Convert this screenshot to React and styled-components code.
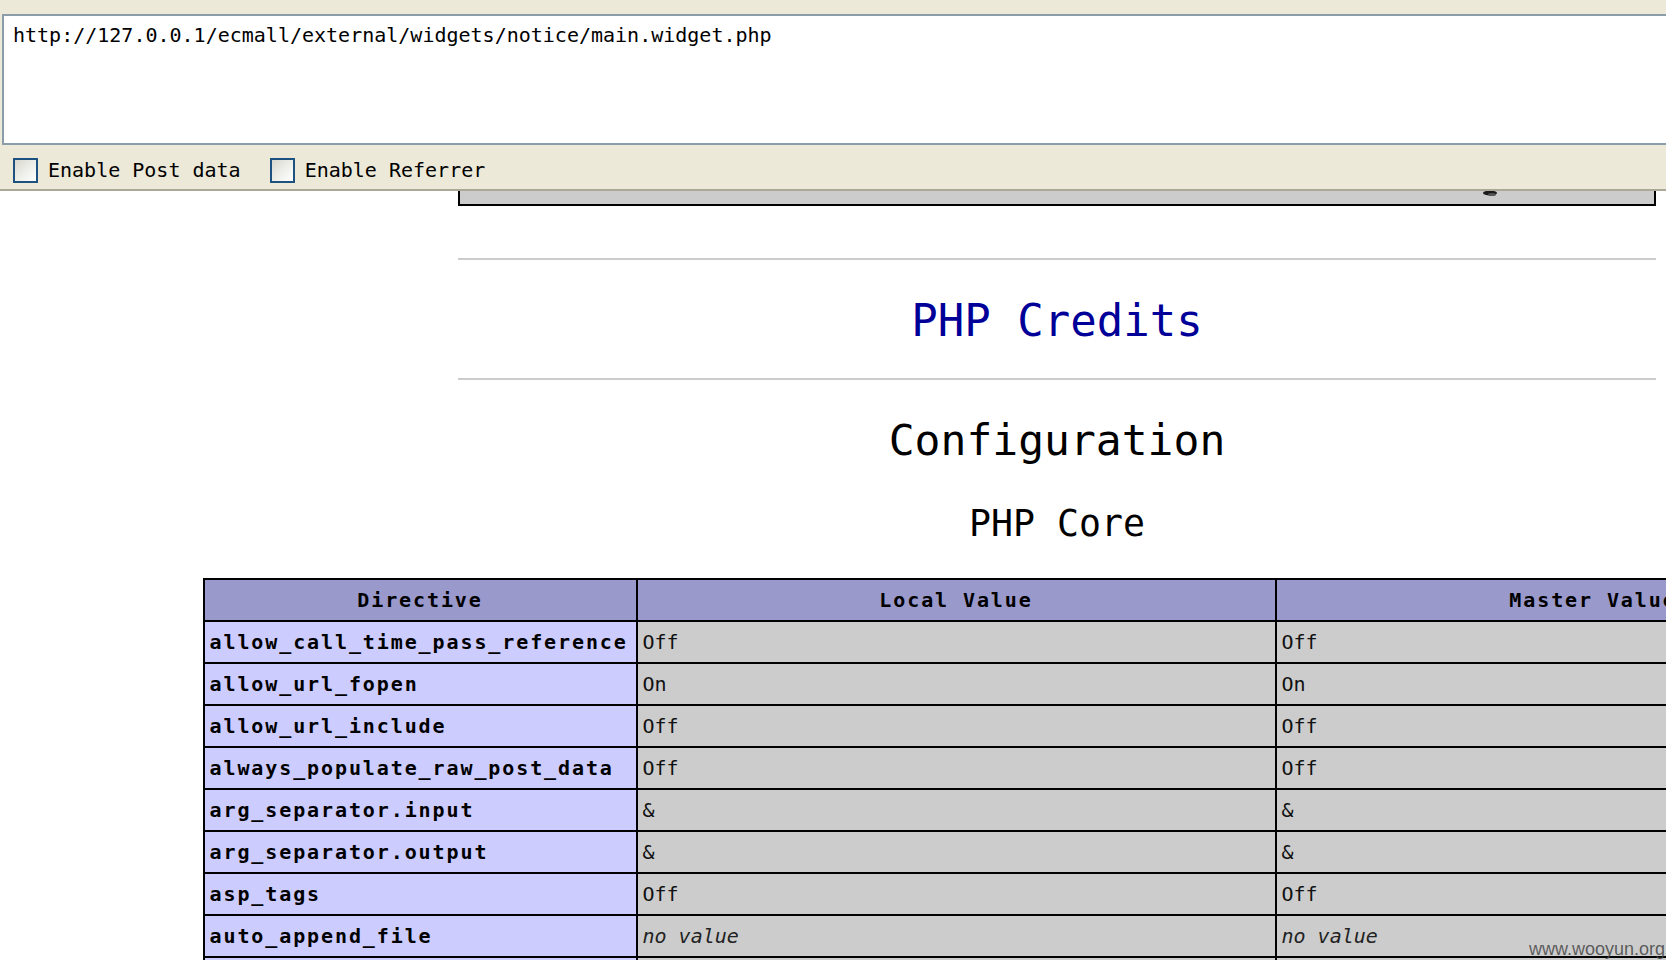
import React from "react";
import styled, { createGlobalStyle } from "styled-components";

const Global = createGlobalStyle`
  html, body { margin: 0; padding: 0; overflow: hidden; background: #fff; }
  body { font-family: "DejaVu Sans Mono", "Liberation Mono", monospace; color: #000; }
`;

const Screen = styled.div`
  position: relative;
  width: 1666px;
  height: 960px;
  display: flex;
  flex-direction: column;
  overflow: hidden;
`;

const HackBar = styled.div`
  flex: none;
  background: #ece9d8;
  padding-top: 14px;
  border-bottom: 2px solid #aca899;
  overflow: hidden;
`;

const UrlBox = styled.textarea`
  display: block;
  box-sizing: border-box;
  width: 1720px;
  height: 131px;
  margin: 0 0 0 2px;
  padding: 7px 9px 5px;
  border: 2px solid #8b9daa;
  background: #fff;
  font: 20px/24px "DejaVu Sans Mono", "Liberation Mono", monospace;
  color: #000;
  resize: none;
  outline: none;
  overflow: hidden;
`;

const Options = styled.div`
  box-sizing: border-box;
  height: 44px;
  display: flex;
  align-items: center;
  gap: 29px;
  padding: 6px 0 0 13px;
`;

const Option = styled.label`
  display: flex;
  align-items: center;
  gap: 10px;
  font-size: 20px;
  line-height: 24px;
  color: #000;
`;

const Box = styled.span`
  box-sizing: border-box;
  width: 25px;
  height: 25px;
  border: 2px solid #1c5180;
  background: linear-gradient(135deg, #d6d6cf 0%, #ececE6 45%, #ffffff 100%);
`;

const Viewport = styled.div`
  flex: 1;
  overflow: hidden;
  background: #fff;
`;

const Page = styled.div`
  width: 2114px;
  display: flex;
  flex-direction: column;
  align-items: center;
`;

const VersionBox = styled.div`
  box-sizing: border-box;
  width: 1198px;
  height: 15px;
  border: 2px solid #000;
  border-top: 0;
  background: #cccccc;
  display: flex;
  justify-content: flex-end;
  align-items: flex-start;
  padding-right: 156px;
`;

const Rule = styled.hr`
  width: 1198px;
  height: 2px;
  border: 0;
  background: #cccccc;
  margin: ${(p) => p.$top}px 0 0;
`;

const Title = styled.h1`
  margin: ${(p) => p.$top}px 0 0;
  font-family: "DejaVu Sans Mono", "Liberation Mono", monospace;
  font-weight: normal;
  font-size: ${(p) => p.$size}px;
  line-height: ${(p) => p.$lh}px;
  color: ${(p) => p.$color || "#000"};
  text-align: center;
  white-space: nowrap;
`;

const TitleLink = styled.a`
  color: #000099;
  text-decoration: none;
`;

const Table = styled.table`
  border-collapse: collapse;
  table-layout: fixed;
  width: 1707px;
  margin-top: 33px;
  font-size: 20px;
`;

const Col = styled.col`
  width: ${(p) => p.$w}px;
`;

const cellBg = { h: "#9999cc", e: "#ccccff", v: "#cccccc" };

const Cell = styled.td`
  border: 2px solid #000;
  padding: 8px 5px;
  line-height: 24px;
  white-space: nowrap;
  overflow: hidden;
  background: ${(p) => cellBg[p.$kind]};
  font-weight: ${(p) => (p.$kind === "v" ? "normal" : "bold")};
  letter-spacing: ${(p) => (p.$kind === "v" ? "0" : "1.9px")};
  text-align: ${(p) => (p.$kind === "h" ? "center" : "left")};
  color: ${(p) => (p.$kind === "v" ? "#111" : "#000")};
`;

const NoValue = styled.i`
  font-style: italic;
  color: #222;
`;

const Watermark = styled.div`
  position: absolute;
  right: 1px;
  bottom: 2px;
  font-family: "Liberation Sans", Arial, sans-serif;
  font-size: 18px;
  line-height: 18px;
  color: rgba(70, 70, 70, 0.85);
`;

const rows = [
  ["allow_call_time_pass_reference", "Off", "Off"],
  ["allow_url_fopen", "On", "On"],
  ["allow_url_include", "Off", "Off"],
  ["always_populate_raw_post_data", "Off", "Off"],
  ["arg_separator.input", "&", "&"],
  ["arg_separator.output", "&", "&"],
  ["asp_tags", "Off", "Off"],
  ["auto_append_file", null, null],
  ["auto_detect_line_endings", "0", "0"],
  ["auto_globals_jit", "On", "On"],
];

const Value = ({ v }) => (v === null ? <NoValue>no value</NoValue> : v);

export default function App() {
  return (
    <Screen>
      <Global />
      <HackBar>
        <UrlBox
          readOnly
          spellCheck={false}
          value="http://127.0.0.1/ecmall/external/widgets/notice/main.widget.php"
        />
        <Options>
          <Option>
            <Box />
            Enable Post data
          </Option>
          <Option>
            <Box />
            Enable Referrer
          </Option>
        </Options>
      </HackBar>
      <Viewport>
        <Page>
          <VersionBox>
            <svg width="15" height="6" viewBox="0 0 15 6">
              <ellipse cx="7" cy="2" rx="7" ry="2.4" fill="#1a1a1a" />
              <ellipse cx="9" cy="3.5" rx="4" ry="1.5" fill="#555" />
            </svg>
          </VersionBox>
          <Rule $top={52} />
          <Title $top={35} $size={44} $lh={52}>
            <TitleLink href="#credits">PHP Credits</TitleLink>
          </Title>
          <Rule $top={31} />
          <Title $top={34.5} $size={43} $lh={50}>
            Configuration
          </Title>
          <Title as="h2" $top={38.3} $size={36.5} $lh={42}>
            PHP Core
          </Title>
          <Table>
            <colgroup>
              <Col $w={433} />
              <Col $w={639} />
              <Col $w={635} />
            </colgroup>
            <thead>
              <tr>
                <Cell as="th" $kind="h">Directive</Cell>
                <Cell as="th" $kind="h">Local Value</Cell>
                <Cell as="th" $kind="h">Master Value</Cell>
              </tr>
            </thead>
            <tbody>
              {rows.map(([name, local, master]) => (
                <tr key={name}>
                  <Cell $kind="e">{name}</Cell>
                  <Cell $kind="v">
                    <Value v={local} />
                  </Cell>
                  <Cell $kind="v">
                    <Value v={master} />
                  </Cell>
                </tr>
              ))}
            </tbody>
          </Table>
        </Page>
      </Viewport>
      <Watermark>www.wooyun.org</Watermark>
    </Screen>
  );
}
